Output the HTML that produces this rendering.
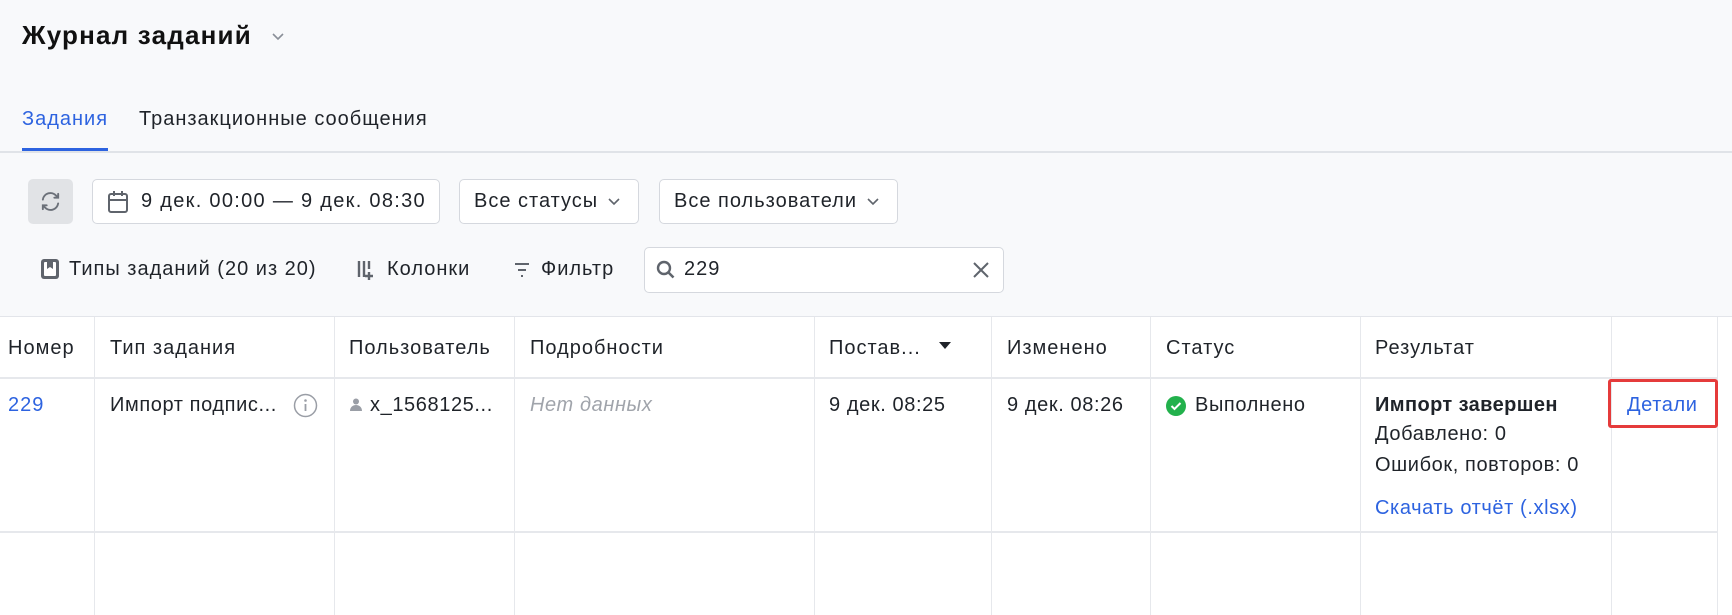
<!DOCTYPE html>
<html><head><meta charset="utf-8"><style>
*{box-sizing:border-box;margin:0;padding:0}
body{width:1732px;height:615px;overflow:hidden;background:#fff;font-family:"Liberation Sans",sans-serif;color:#1f2329;font-size:20px;letter-spacing:1px;position:relative}
.a{position:absolute;white-space:nowrap}
.hdr{position:absolute;left:0;top:0;width:1732px;height:317px;background:#f8f9fb;border-bottom:1px solid #e3e5ea}
.btn{position:absolute;background:#fff;border:1px solid #d5d8de;border-radius:5px;height:45px;top:179px;display:flex;align-items:center;padding-left:14px;font-size:20px}
.vl{position:absolute;top:317px;width:1px;height:298px;background:#e6e8ec}
.hl{position:absolute;left:0;width:1718px;height:2px;background:#e6e8ec}
.blue{color:#2d63e0}
.r{letter-spacing:0.6px}
</style></head><body>
<div class="hdr"></div>
<div class="a" style="left:22px;top:20px;font-size:26px;font-weight:bold;color:#111;letter-spacing:1.2px">Журнал заданий</div>
<svg class="a" style="left:271px;top:32px" width="14" height="10"><path d="M2 2l5 5 5-5" fill="none" stroke="#8a8f98" stroke-width="1.6"/></svg>
<div class="a blue" style="left:22px;top:108px;font-size:20px">Задания</div>
<div class="a" style="left:139px;top:108px;font-size:20px">Транзакционные сообщения</div>
<div class="a" style="left:0;top:151px;width:1732px;height:2px;background:#e0e3e8"></div>
<div class="a" style="left:22px;top:148px;width:86px;height:3px;background:#2d63e0"></div>

<div class="a" style="left:28px;top:179px;width:45px;height:45px;background:#e1e3e6;border-radius:5px"></div>
<svg class="a" style="left:39px;top:190px" width="23" height="23" viewBox="0 0 24 24" fill="none" stroke="#6b7079" stroke-width="2" stroke-linecap="round"><path d="M4 10a8 8 0 0 1 14-4l2 2M20 4v4h-4M20 14a8 8 0 0 1-14 4l-2-2M4 20v-4h4"/></svg>
<div class="btn" style="left:92px;width:348px;letter-spacing:1.3px"><svg width="22" height="24" viewBox="0 0 22 24" fill="none" stroke="#5f646c" stroke-width="2"><rect x="2" y="4" width="18" height="18" rx="2"/><path d="M2 10h18M7 1v5M15 1v5"/></svg><span style="margin-left:12px">9 дек. 00:00 — 9 дек. 08:30</span></div>
<div class="btn" style="left:459px;width:180px">Все статусы<svg style="margin-left:10px" width="12" height="8"><path d="M1 1l5 5 5-5" fill="none" stroke="#5f646c" stroke-width="1.6"/></svg></div>
<div class="btn" style="left:659px;width:239px">Все пользователи<svg style="margin-left:10px" width="12" height="8"><path d="M1 1l5 5 5-5" fill="none" stroke="#5f646c" stroke-width="1.6"/></svg></div>

<svg class="a" style="left:40px;top:258px" width="20" height="22" viewBox="0 0 20 22"><rect x="1" y="1" width="18" height="20" rx="3" fill="#5f646c"/><rect x="4" y="4" width="12" height="14" rx="1" fill="#fff"/><path d="M7 4v7l3-2 3 2V4z" fill="#5f646c"/></svg>
<div class="a" style="left:69px;top:258px">Типы заданий (20 из 20)</div>
<svg class="a" style="left:357px;top:259px" width="22" height="22"><path d="M2 2v16M7 2v16M12 2v8M12 13v8M8 17h8" stroke="#5f646c" stroke-width="2.4" fill="none"/></svg>
<div class="a" style="left:387px;top:258px">Колонки</div>
<svg class="a" style="left:514px;top:262px" width="16" height="16"><path d="M1 2h14M4 8h8M7 14h2" stroke="#5f646c" stroke-width="2"/></svg>
<div class="a" style="left:541px;top:258px">Фильтр</div>
<div class="a" style="left:644px;top:247px;width:360px;height:46px;background:#fff;border:1px solid #d5d8de;border-radius:5px"></div>
<svg class="a" style="left:656px;top:260px" width="20" height="20"><circle cx="8" cy="8" r="6" stroke="#5f646c" stroke-width="2.4" fill="none"/><path d="M12.5 12.5l5 5" stroke="#5f646c" stroke-width="2.6"/></svg>
<div class="a" style="left:684px;top:258px">229</div>
<svg class="a" style="left:972px;top:261px" width="18" height="18"><path d="M2 2l14 14M16 2L2 16" stroke="#5f646c" stroke-width="2"/></svg>

<div class="hl" style="top:377px"></div>
<div class="hl" style="top:531px"></div>
<div class="vl" style="left:94px"></div><div class="vl" style="left:334px"></div><div class="vl" style="left:514px"></div><div class="vl" style="left:814px"></div><div class="vl" style="left:991px"></div><div class="vl" style="left:1150px"></div><div class="vl" style="left:1360px"></div><div class="vl" style="left:1611px"></div><div class="vl" style="left:1717px"></div>

<div class="a" style="left:8px;top:337px">Номер</div>
<div class="a" style="left:110px;top:337px">Тип задания</div>
<div class="a" style="left:349px;top:337px">Пользователь</div>
<div class="a" style="left:530px;top:337px">Подробности</div>
<div class="a" style="left:829px;top:337px">Постав...</div>
<svg class="a" style="left:939px;top:342px" width="12" height="8"><path d="M0 0h12L6 7z" fill="#1f2329"/></svg>
<div class="a" style="left:1007px;top:337px">Изменено</div>
<div class="a" style="left:1166px;top:337px">Статус</div>
<div class="a" style="left:1375px;top:337px">Результат</div>

<div class="a blue" style="left:8px;top:394px">229</div>
<div class="a r" style="left:110px;top:394px">Импорт подпис...</div>
<svg class="a" style="left:293px;top:393px" width="25" height="25"><circle cx="12.5" cy="12.5" r="11" fill="none" stroke="#9a9ea6" stroke-width="1.5"/><path d="M12.5 11v7" stroke="#9a9ea6" stroke-width="1.8"/><circle cx="12.5" cy="7.5" r="1.3" fill="#9a9ea6"/></svg>
<svg class="a" style="left:350px;top:398px" width="12" height="13"><circle cx="6" cy="3.5" r="3" fill="#9a9ea6"/><path d="M0 13c0-4 3-6 6-6s6 2 6 6z" fill="#9a9ea6"/></svg>
<div class="a r" style="left:370px;top:394px">x_1568125...</div>
<div class="a r" style="left:530px;top:394px;color:#a0a4ab;font-style:italic">Нет данных</div>
<div class="a r" style="left:829px;top:394px">9 дек. 08:25</div>
<div class="a r" style="left:1007px;top:394px">9 дек. 08:26</div>
<svg class="a" style="left:1166px;top:396px" width="20" height="20"><circle cx="10" cy="10" r="10" fill="#22b14c"/><path d="M5.5 10l3 3 6-6" stroke="#fff" stroke-width="2" fill="none"/></svg>
<div class="a r" style="left:1195px;top:394px">Выполнено</div>
<div class="a" style="left:1375px;top:394px;font-weight:bold;letter-spacing:0.4px">Импорт завершен</div>
<div class="a r" style="left:1375px;top:423px">Добавлено: 0</div>
<div class="a r" style="left:1375px;top:454px">Ошибок, повторов: 0</div>
<div class="a blue r" style="left:1375px;top:497px">Скачать отчёт (.xlsx)</div>
<div class="a" style="left:1608px;top:379px;width:110px;height:49px;border:3px solid #e53b3b;border-radius:3px"></div>
<div class="a blue r" style="left:1627px;top:394px">Детали</div>
</body></html>
